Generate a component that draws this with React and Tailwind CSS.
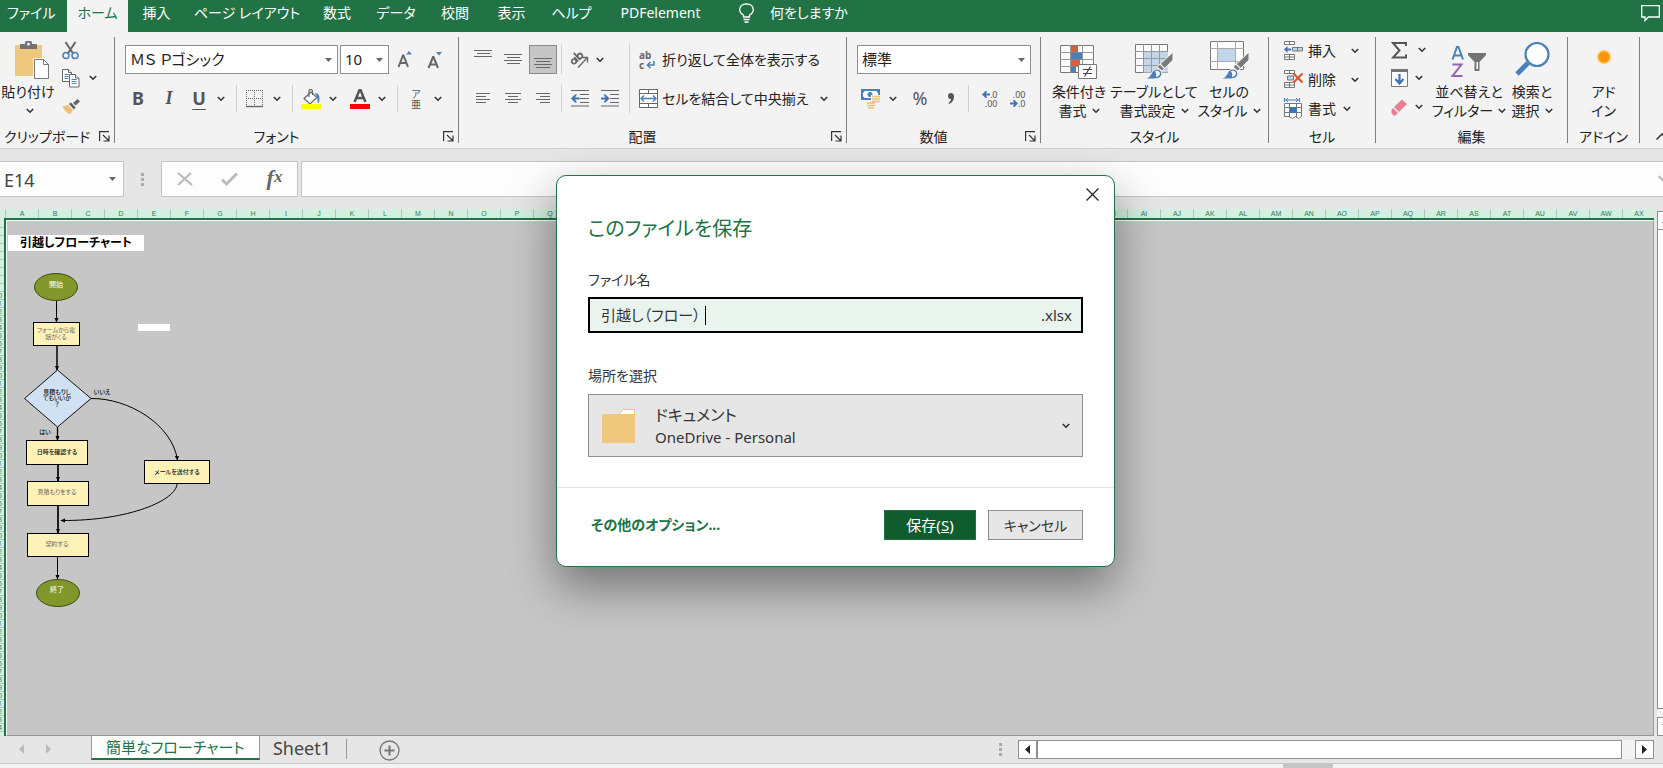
import React, { useState } from 'react';

const tabs = [
  { label: 'ファイル', className: 'w-[67px] pl-[7px] text-left' },
  { label: 'ホーム', className: 'w-[61px]', active: true },
  { label: '挿入', className: 'w-[57px]' },
  { label: 'ページ レイアウト', className: 'w-[124px]' },
  { label: '数式', className: 'w-[56px]' },
  { label: 'データ', className: 'w-[62px]' },
  { label: '校閲', className: 'w-[56px]' },
  { label: '表示', className: 'w-[57px]' },
  { label: 'ヘルプ', className: 'w-[63px]' },
  { label: 'PDFelement', className: 'w-[115px]' },
];

const columnName = (i) =>
  i < 26 ? String.fromCharCode(65 + i) : 'A' + String.fromCharCode(65 + i - 26);

const columns = Array.from({ length: 50 }, (_, i) => columnName(i));
const rows = Array.from({ length: 64 }, (_, i) => i + 1);

/* ---------- small shared pieces ---------- */

const Chevron = () => (
  <svg width="8" height="6" viewBox="0 0 8 6" fill="none" stroke="#333" strokeWidth="1.6">
    <path d="M0.8 1 4 4.2 7.2 1" />
  </svg>
);

const Triangle = () => (
  <svg width="7" height="4" viewBox="0 0 7 4" fill="#666">
    <path d="M0 0h7L3.5 4z" />
  </svg>
);

const IconButton = ({ label, className = '', children }) => (
  <button aria-label={label} className={`flex shrink-0 items-center justify-center ${className}`}>
    {children}
  </button>
);

const Divider = ({ className = '' }) => (
  <div className={`flex shrink-0 justify-center self-stretch ${className}`}>
    <div className="w-px bg-[#cfcfcf]" />
  </div>
);

const Dropdown = ({ label, value, className = '' }) => (
  <div className={`relative flex h-[29px] items-center border border-[#8f8f8f] bg-white ${className}`}>
    <select
      aria-label={label}
      defaultValue={value}
      className="h-full w-full appearance-none bg-transparent pl-1 text-[15px] text-[#222] outline-none"
    >
      <option>{value}</option>
    </select>
    <span className="pointer-events-none absolute right-[5px]">
      <Triangle />
    </span>
  </div>
);

const Group = ({ title, launcher, className = '', children }) => (
  <section className={`my-[5px] flex shrink-0 flex-col border-r border-[#808080] ${className}`}>
    <div className="h-[93px]">{children}</div>
    <div className="flex h-[14px] items-center">
      <span className="flex-1 text-center whitespace-nowrap">{title}</span>
      {launcher && (
        <IconButton label={`${title}の設定`} className="w-[20px]">
          <svg width="11" height="11" viewBox="0 0 11 11" fill="none" stroke="#333" strokeWidth="1.2">
            <path d="M0.6 10V0.6H10M4 4l5.5 5.5M10 4.5V10H4.5" />
          </svg>
        </IconButton>
      )}
    </div>
  </section>
);

const BigButton = ({ icon, line1, line2, arrow = true, className = '' }) => (
  <button className={`flex shrink-0 flex-col items-center whitespace-nowrap leading-[19px] ${className}`}>
    <span className="flex h-[45px] items-end justify-center pb-[2px]">{icon}</span>
    <span>{line1}</span>
    <span className="flex items-center gap-[5px]">
      {line2}
      {arrow && <Chevron />}
    </span>
  </button>
);

const Lines = ({ rows: list, width = 18, height = 18 }) => (
  <svg width={width} height={height} viewBox={`0 0 ${width} ${height}`} fill="#666">
    {list.map(([x, y, w]) => (
      <rect key={y} x={x} y={y} width={w} height="1" />
    ))}
  </svg>
);

/* ---------- icons ---------- */

const PasteIcon = () => (
  <svg width="36" height="40" viewBox="0 0 36 40">
    <path d="M1 5h27v31H1z" fill="#edc87e" />
    <path d="M6 9V4h5V2.500q0-1.500 1.500-1.500h4q1.500 0 1.500 1.500V4h5v5z" fill="#737373" />
    <circle cx="14.500" cy="4" r="1.500" fill="#f3f3f3" />
    <path d="M19 18h11l6 6v16H19z" fill="#f3f3f3" />
    <path d="M20.500 19.500h9l5 5v14h-14z" fill="#fff" stroke="#777" />
    <path d="M29.500 19.500v5h5" fill="none" stroke="#777" />
  </svg>
);

const CutIcon = () => (
  <svg width="17" height="19" viewBox="0 0 17 19" fill="none">
    <path d="M3.500 1 11.500 13M13.500 1 5.500 13" stroke="#666" strokeWidth="2" />
    <circle cx="4" cy="14.500" r="3" stroke="#4a80b8" strokeWidth="1.500" />
    <circle cx="13" cy="14.500" r="3" stroke="#4a80b8" strokeWidth="1.500" />
  </svg>
);

const CopyIcon = () => (
  <svg width="18" height="19" viewBox="0 0 18 19" fill="#fff" stroke="#666">
    <path d="M0.500 0.500h6l3 3v9h-9z" />
    <path d="M6.500 0.500v3h3" />
    <path d="M2.500 5.500h4M2.500 7.500h4M2.500 9.500h4" stroke="#4a80b8" />
    <path d="M7.500 5.500h6l3.500 3.500v9h-9.500z" />
    <path d="M13.500 5.500v3.500h3.500" />
    <path d="M9.500 10.500h5M9.500 12.500h5M9.500 14.500h5" stroke="#4a80b8" />
  </svg>
);

const FormatPainterIcon = () => (
  <svg width="18" height="16" viewBox="0 0 18 16">
    <path d="M0.500 7.500 6 6l5 5-3 4.500Q3 13 0.500 7.500z" fill="#edc07a" />
    <path d="M7 5 9 3.500l4.500 5-1.500 2z" fill="#5a5a5a" />
    <path d="m11 4 4.500-4L18 2.500 13.500 6.500z" fill="#666" />
  </svg>
);

const BordersIcon = () => (
  <svg width="18" height="18" viewBox="0 0 18 18" fill="none" stroke="#666">
    <path d="M0.500 0v16M16.500 0v16M8.500 0v16M0 0.500h17M0 8.500h17" strokeDasharray="1 1" />
    <path d="M0 16.500h17" strokeWidth="1.400" />
  </svg>
);

const FillIcon = () => (
  <svg width="20" height="20" viewBox="0 0 20 20">
    <path d="M10 3 3 9.500l6 5.500 7-6.500z" fill="#fff" stroke="#666" strokeWidth="1.200" />
    <path d="M8 8V2.500q0-2 1.700-2t1.800 2V6" fill="none" stroke="#666" strokeWidth="1.200" />
    <path d="M14 4q5 .5 4.500 6 0 3-1.500 4.500Q16 11 16.500 9z" fill="#4a80b8" />
    <path d="M0 15h20v5H0z" fill="#ff0" />
  </svg>
);

const OrientationIcon = () => (
  <svg width="20" height="19" viewBox="0 0 20 19" fill="none" stroke="#666" strokeWidth="1.700">
    <g transform="rotate(-42 8 8)">
      <circle cx="3.500" cy="8.500" r="2.300" />
      <path d="M6.500 5.500v6M9 2v9.500" />
      <circle cx="11.500" cy="8.500" r="2.400" />
    </g>
    <path d="M9 17.500 18 8M13.500 7.500h5v5" strokeWidth="1.300" />
  </svg>
);

const Indent = ({ out }) => (
  <svg width="18" height="17" viewBox="0 0 18 17">
    <path d="M0 0.500h18M9 4.500h9M9 8.500h9M9 12.500h9M0 16h18" stroke="#666" fill="none" />
    <path
      d={out ? 'M0 8.500 4 4.500h2L4 7.500h4.500v2H4l2 3H4z' : 'M8.500 8.500 4.500 4.500h-2L4.500 7.500H0v2h4.500l-2 3h2z'}
      fill="#3f74b0"
    />
  </svg>
);

const MergeIcon = () => (
  <svg width="19" height="19" viewBox="0 0 19 19" fill="#fff" stroke="#666">
    <path d="M0.500 0.500h18v18h-18z" />
    <path d="M0.500 4.500h18M0.500 14.500h18M9.500 0.500v4M9.500 14.500v4" />
    <path d="M2.500 9.500h14M5 6.500l-3 3 3 3M14 6.500l3 3-3 3" fill="none" stroke="#4a80b8" strokeWidth="1.400" />
  </svg>
);

const WrapIcon = () => (
  <span className="flex w-[18px] flex-col items-start text-[10px] leading-[10px] font-bold text-[#666]">
    <span>ab</span>
    <span className="flex items-center gap-[2px]">
      c
      <svg width="9" height="8" viewBox="0 0 9 8" fill="none" stroke="#4a80b8" strokeWidth="1.500">
        <path d="M8 0v4H2M4.500 1 1.500 4l3 3" />
      </svg>
    </span>
  </span>
);

const CurrencyIcon = () => (
  <svg width="20" height="20" viewBox="0 0 20 20">
    <path d="M0 0h19v11H0z" fill="#4a80b8" />
    <path d="M2 3.500q1.500 0 1.500-1.500h12q0 1.500 1.500 1.500v4q-1.500 0-1.500 1.500h-12Q3.500 7.500 2 7.500z" fill="#fff" />
    <circle cx="9" cy="5.500" r="2.500" fill="#4a80b8" />
    <path d="M10 6h9v9h-3v4H5v-7h5z" fill="#f3f3f3" />
    <path d="M11 7.500h8M11 10h8M11 12.500h8M6 14h8M6 16.500h8M7 19h6" stroke="#edc07a" strokeWidth="1.700" />
  </svg>
);

const Decimal = ({ increase }) => (
  <span className="flex w-[17px] flex-col items-stretch text-[9px] leading-[9px]">
    <span className="flex items-center justify-end">
      {increase && (
        <svg width="8" height="7" viewBox="0 0 8 7" fill="#3f74b0">
          <path d="M0 3.500 3.500 0H5L4 2.500h4v2H4L5 7H3.500z" />
        </svg>
      )}
      {increase ? '.0' : '.00'}
    </span>
    <span className="flex items-center justify-end">
      {!increase && (
        <svg width="8" height="7" viewBox="0 0 8 7" fill="#3f74b0">
          <path d="M8 3.500 4.500 0H3l1 2.500H0v2h4L3 7h1.500z" />
        </svg>
      )}
      {increase ? '.00' : '.0'}
    </span>
  </span>
);

const ConditionalIcon = () => (
  <svg width="38" height="35" viewBox="0 0 38 35">
    <path d="M0.500 0.500h33v27h-33z" fill="#fff" stroke="#777" />
    <path d="M0 7.500h34M0 14.500h34M0 21.500h34M10.500 0v28M22.500 0v28" stroke="#999" />
    <path d="M11 1h7v6.500h-7zM11 14.500h9v7h-9z" fill="#d9603f" />
    <path d="M11 7.500h11v7H11zM11 21.500h5v5.500h-5z" fill="#4a80b8" />
    <path d="M18.500 19.500h18v14h-18z" fill="#fff" stroke="#777" />
    <path d="M23 24.500h9M23 28.500h9M30.500 21.500l-6 10" stroke="#444" strokeWidth="1.200" />
  </svg>
);

const Brush = () => (
  <>
    <path d="M38 8v8L27 27l-5-4z" fill="#7a7a7a" stroke="#f3f3f3" />
    <path d="m25 20 5 5" stroke="#f3f3f3" strokeWidth="1.300" />
    <path d="M10 35q4-1 6-5 2-5 7-5 4 1 4 5-1 5-8 5z" fill="#4a80b8" stroke="#f3f3f3" />
    <path d="M20 27q4-1 5 2 0 3-4 4 1-3-1-6z" fill="#fff" />
  </>
);

const TableStyleIcon = () => (
  <svg width="38" height="36" viewBox="0 0 38 36">
    <path d="M0.500 0.500h32v28h-32z" fill="#fff" stroke="#777" />
    <path d="M9 8h24v20.500H9z" fill="#c2d5ea" />
    <path d="M0 7.500h33M0 14.500h33M0 21.500h33M8.500 0v29M16.500 0v29M24.500 0v29" stroke="#999" />
    <Brush />
  </svg>
);

const CellStyleIcon = () => (
  <svg width="39" height="39" viewBox="0 0 39 39">
    <path d="M0.500 0.500h33v28h-33z" fill="#fff" stroke="#777" />
    <path d="M0 7.500h34M0 20.500h34M7.500 0v29M25.500 0v29" stroke="#aaa" />
    <path d="M8 8h17v12H8z" fill="#c2d5ea" />
    <g transform="translate(1 3)">
      <Brush />
    </g>
  </svg>
);

const CellsInsertIcon = () => (
  <svg width="19" height="19" viewBox="0 0 19 19" fill="#fff" stroke="#777">
    <path d="M0.500 0.500h10v3h-10zM5.500 0.500v3M0.500 13.500h10v5h-10zM0.500 16h10M5.500 13.500v5" />
    <path d="M8.500 6.500h10v3.500h-10z" fill="#c2d5ea" />
    <path d="M13.500 6.500v3.500" />
    <path d="M0 8.300 3.500 5v2.500H7v2H3.500V12z" fill="#3f74b0" stroke="none" />
  </svg>
);

const CellsDeleteIcon = () => (
  <svg width="19" height="19" viewBox="0 0 19 19" fill="#fff" stroke="#777">
    <path d="M0.500 0.500h10v3h-10zM5.500 0.500v3M0.500 12.500h10v5h-10zM0.500 15h10M5.500 12.500v5" />
    <path d="M3.500 6h6v4h-6z" fill="#c2d5ea" />
    <path d="m9.500 3.500 9 9M18.500 3.500l-9 9" stroke="#d9532c" strokeWidth="2.200" />
  </svg>
);

const CellsFormatIcon = () => (
  <svg width="19" height="21" viewBox="0 0 19 21" fill="#fff" stroke="#777">
    <path d="M0.500 5.500h17v13l-3 2-3-2-3 2-3-2h-5z" />
    <path d="M0 9.500h18M0 14.500h18M5.500 5.500v14M12.500 5.500v14" />
    <path d="M6 9.500h6.500v5H6z" fill="#3f74b0" stroke="#3f74b0" />
    <path d="M0.500 0v4M15.500 0v4M1 2h14M4 0 2 2l2 2M12 0l2 2-2 2" fill="none" stroke="#4a80b8" />
  </svg>
);

const SumIcon = () => (
  <svg width="16" height="17" viewBox="0 0 16 17" fill="none" stroke="#555" strokeWidth="2">
    <path d="M15 4V1H2l6.500 7.500L2 15.500h13V12.500" />
  </svg>
);

const FillDownIcon = () => (
  <svg width="18" height="19" viewBox="0 0 18 19">
    <path d="M0.500 0.500h16v17h-16z" fill="#fff" stroke="#777" />
    <path d="M0 0h17v3H0z" fill="#777" />
    <path d="M8.500 5v9M4.500 10l4 4.500 4-4.500" fill="none" stroke="#3f74b0" strokeWidth="2.200" />
  </svg>
);

const EraserIcon = () => (
  <svg width="17" height="17" viewBox="0 0 17 17">
    <path d="M11 0.500 16 5 8 13 3 8z" fill="#e77f95" />
    <path d="m2 9 5 5-2.500 2.500H2.500L0.500 14v-3z" fill="#e77f95" />
  </svg>
);

const SortFilterIcon = () => (
  <svg width="36" height="35" viewBox="0 0 36 35" fill="none">
    <path d="M1.500 14.500 6 2h1.500L12 14.500M3.500 10.500h7" stroke="#4a80b8" strokeWidth="2" />
    <path d="M1.500 19.500h9L1.500 31h10" stroke="#9664b4" strokeWidth="2" />
    <path d="M17 8h18v2l-6.500 7v9h-5v-9L17 10z" fill="#737373" />
    <path d="M25.500 17h1.500v7h-1.500z" fill="#fff" />
  </svg>
);

const FindIcon = () => (
  <svg width="35" height="38" viewBox="0 0 35 38" fill="none" stroke="#4a80b8">
    <path d="M2 32 13 21" strokeWidth="5" />
    <circle cx="22" cy="12.500" r="11.500" fill="#fff" strokeWidth="2.200" />
  </svg>
);

/* ---------- ribbon ---------- */

const TabBar = () => (
  <header className="flex h-[32px] shrink-0 items-stretch bg-[#217346] text-[14px] text-white">
    {tabs.map((tab) => (
      <button
        key={tab.label}
        className={`shrink-0 pb-[7px] whitespace-nowrap ${tab.className} ${
          tab.active ? 'bg-[#f3f3f3] text-[#217346]' : ''
        }`}
      >
        {tab.label}
      </button>
    ))}
    <button className="ml-[21px] flex items-center gap-[16px] pb-[7px] whitespace-nowrap">
      <svg width="15" height="20" viewBox="0 0 15 20" fill="none" stroke="#fff" strokeWidth="1.300">
        <path d="M4.500 14v-2q-3.800-2-3.800-5.500Q1 1 7.500 .8 14 1 14.300 6.500 14.300 10 10.500 12v2zM4.500 16.500h6M5.500 19h4" />
      </svg>
      何をしますか
    </button>
    <button aria-label="コメント" className="mr-[3px] ml-auto pb-[6px]">
      <svg width="19" height="17" viewBox="0 0 19 17" fill="none" stroke="#fff" strokeWidth="1.300">
        <path d="M0.700 0.700h17.600v11.300H7.500L4 15.500V12H0.700z" />
      </svg>
    </button>
  </header>
);

const ClipboardGroup = () => (
  <Group title="クリップボード" launcher className="w-[115px]">
    <div className="flex h-full">
      <button className="flex w-[56px] flex-col items-center whitespace-nowrap leading-[19px]">
        <span className="flex h-[45px] items-end pb-[2px] pl-2">
          <PasteIcon />
        </span>
        <span>貼り付け</span>
        <span className="flex h-[19px] items-center pl-1">
          <Chevron />
        </span>
      </button>
      <div className="flex flex-col pl-[3px]">
        <IconButton label="切り取り" className="h-[26px] w-[22px]">
          <CutIcon />
        </IconButton>
        <div className="flex h-[30px] items-center">
          <IconButton label="コピー" className="w-[24px]">
            <CopyIcon />
          </IconButton>
          <IconButton label="コピーのオプション" className="w-[20px]">
            <Chevron />
          </IconButton>
        </div>
        <IconButton label="書式のコピー/貼り付け" className="h-[28px] w-[24px]">
          <FormatPainterIcon />
        </IconButton>
      </div>
    </div>
  </Group>
);

const FontGroup = () => (
  <Group title="フォント" launcher className="w-[344px]">
    <div className="flex items-center gap-[2px] pt-2 pl-[10px]">
      <Dropdown label="フォント" value="ＭＳ Ｐゴシック" className="w-[213px]" />
      <Dropdown label="フォント サイズ" value="10" className="w-[49px]" />
      <IconButton label="フォント サイズの拡大" className="w-[28px]">
        <svg width="16" height="18" viewBox="0 0 16 18" fill="none">
          <path d="M1.500 16 6 4.500h.5L11 16M3 12h6.500" stroke="#666" strokeWidth="2" />
          <path d="M9 3.500 12 0l3 3.500z" fill="#4a80b8" />
        </svg>
      </IconButton>
      <IconButton label="フォント サイズの縮小" className="w-[28px]">
        <svg width="16" height="18" viewBox="0 0 16 18" fill="none">
          <path d="M1.500 17 6 6h.5L11 17M3 13.500h6.500" stroke="#666" strokeWidth="2" />
          <path d="M9 1h6l-3 3.500z" fill="#4a80b8" />
        </svg>
      </IconButton>
    </div>
    <div className="mt-[11px] flex h-[27px] items-center pl-2 text-[18px] text-[#555]">
      <IconButton label="太字" className="w-[30px] font-bold">B</IconButton>
      <IconButton label="斜体" className="w-[32px] font-['Liberation_Serif'] font-bold italic">I</IconButton>
      <IconButton label="下線" className="w-[28px] font-bold underline underline-offset-4">U</IconButton>
      <IconButton label="下線の種類" className="w-[16px]"><Chevron /></IconButton>
      <Divider className="w-[15px]" />
      <IconButton label="罫線" className="w-[22px]"><BordersIcon /></IconButton>
      <IconButton label="罫線の種類" className="w-[22px]"><Chevron /></IconButton>
      <Divider className="w-[9px]" />
      <IconButton label="塗りつぶしの色" className="w-[28px]"><FillIcon /></IconButton>
      <IconButton label="塗りつぶしの色の選択" className="w-[16px]"><Chevron /></IconButton>
      <IconButton label="フォントの色" className="ml-[5px] w-[28px]">
        <svg width="20" height="20" viewBox="0 0 20 20">
          <path d="M4.500 13 9.500 1h1l5 12M6.500 9h7" fill="none" stroke="#555" strokeWidth="2.400" />
          <path d="M0 15h20v5H0z" fill="#f00" />
        </svg>
      </IconButton>
      <IconButton label="フォントの色の選択" className="w-[16px]"><Chevron /></IconButton>
      <Divider className="w-[15px]" />
      <IconButton label="ふりがな" className="w-[22px] flex-col text-[10px] leading-[10px]">
        <span>ア</span>
        <span>亜</span>
      </IconButton>
      <IconButton label="ふりがなの設定" className="w-[22px]"><Chevron /></IconButton>
    </div>
  </Group>
);

const AlignmentGroup = () => (
  <Group title="配置" launcher className="w-[388px]">
    <div className="flex">
      <div className="w-[166px] pt-2 pl-[9px]">
        <div className="flex h-[29px] items-center">
          <IconButton label="上揃え" className="h-full w-[30px]">
            <Lines rows={[[0, 0, 18], [3, 3, 13], [0, 6, 18]]} height={19} />
          </IconButton>
          <IconButton label="上下中央揃え" className="h-full w-[30px]">
            <Lines rows={[[0, 4, 18], [3, 7, 13], [0, 10, 18], [3, 13, 13]]} height={19} />
          </IconButton>
          <IconButton label="下揃え" className="ml-[1px] h-full w-[28px] border border-[#8a8a8a] bg-[#c6c6c6]">
            <Lines rows={[[0, 8, 18], [2, 11, 14], [0, 14, 18], [2, 17, 14]]} height={19} />
          </IconButton>
          <Divider className="w-[9px]" />
          <IconButton label="方向" className="w-[26px]"><OrientationIcon /></IconButton>
          <IconButton label="方向の選択" className="w-[16px]"><Chevron /></IconButton>
        </div>
        <div className="mt-[11px] flex h-[27px] items-center">
          <IconButton label="左揃え" className="w-[30px]">
            <Lines rows={[[0, 0, 14], [0, 3, 10], [0, 6, 14], [0, 9, 10]]} width={14} height={11} />
          </IconButton>
          <IconButton label="中央揃え" className="w-[30px]">
            <Lines rows={[[0, 0, 16], [3, 3, 10], [0, 6, 16], [3, 9, 10]]} width={16} height={11} />
          </IconButton>
          <IconButton label="右揃え" className="w-[29px]">
            <Lines rows={[[0, 0, 14], [4, 3, 10], [0, 6, 14], [4, 9, 10]]} width={14} height={11} />
          </IconButton>
          <Divider className="w-[9px]" />
          <IconButton label="インデントを減らす" className="w-[28px]"><Indent out /></IconButton>
          <IconButton label="インデントを増やす" className="w-[31px]"><Indent /></IconButton>
        </div>
      </div>
      <div className="mt-[7px] flex h-[69px]">
        <Divider className="w-[9px]" />
      </div>
      <div className="pt-2 pl-[5px]">
        <button className="flex h-[29px] items-center gap-[5px] whitespace-nowrap">
          <WrapIcon />
          折り返して全体を表示する
        </button>
        <button className="mt-[11px] flex h-[27px] items-center gap-1 whitespace-nowrap">
          <MergeIcon />
          セルを結合して中央揃え
          <span className="ml-2"><Chevron /></span>
        </button>
      </div>
    </div>
  </Group>
);

const NumberGroup = () => (
  <Group title="数値" launcher className="w-[194px]">
    <div className="flex pt-2 pl-[10px]">
      <Dropdown label="表示形式" value="標準" className="w-[174px]" />
    </div>
    <div className="mt-[11px] flex h-[27px] items-center pl-[10px] text-[#555]">
      <IconButton label="通貨表示形式" className="w-[28px]"><CurrencyIcon /></IconButton>
      <IconButton label="通貨の選択" className="w-[16px]"><Chevron /></IconButton>
      <IconButton label="パーセント スタイル" className="w-[38px] text-[18px]">%</IconButton>
      <IconButton label="桁区切りスタイル" className="w-[23px]">
        <svg width="6" height="11" viewBox="0 0 6 11" fill="#555">
          <path d="M3 0q3 0 3 3.500Q6 9 1 11L.5 10Q3 8.500 3 6 0 6 0 3t3-3z" />
        </svg>
      </IconButton>
      <Divider className="w-[13px]" />
      <IconButton label="小数点以下の表示桁数を増やす" className="w-[28px]"><Decimal increase /></IconButton>
      <IconButton label="小数点以下の表示桁数を減らす" className="w-[28px]"><Decimal /></IconButton>
    </div>
  </Group>
);

const StylesGroup = () => (
  <Group title="スタイル" className="w-[228px]">
    <div className="flex pl-[5px]">
      <BigButton icon={<ConditionalIcon />} line1="条件付き" line2="書式" className="w-[66px]" />
      <BigButton icon={<TableStyleIcon />} line1="テーブルとして" line2="書式設定" className="w-[84px]" />
      <BigButton icon={<CellStyleIcon />} line1="セルの" line2="スタイル" className="w-[66px]" />
    </div>
  </Group>
);

const CellsGroup = () => (
  <Group title="セル" className="w-[107px]">
    <div className="flex flex-col pl-[15px]">
      <button className="flex h-[27px] items-center gap-[5px]">
        <CellsInsertIcon /> 挿入
        <span className="ml-[10px]"><Chevron /></span>
      </button>
      <button className="flex h-[31px] items-center gap-[5px]">
        <CellsDeleteIcon /> 削除
        <span className="ml-[10px]"><Chevron /></span>
      </button>
      <button className="flex h-[27px] items-center gap-[5px]">
        <CellsFormatIcon /> 書式
        <span className="ml-[2px]"><Chevron /></span>
      </button>
    </div>
  </Group>
);

const EditingGroup = () => (
  <Group title="編集" className="w-[192px]">
    <div className="flex">
      <div className="flex w-[58px] flex-col pl-[15px]">
        <button aria-label="合計" className="flex h-[26px] items-center gap-[11px]">
          <SumIcon /> <Chevron />
        </button>
        <button aria-label="フィル" className="flex h-[30px] items-center gap-[6px]">
          <FillDownIcon /> <Chevron />
        </button>
        <button aria-label="クリア" className="flex h-[28px] items-center gap-[7px]">
          <EraserIcon /> <Chevron />
        </button>
      </div>
      <BigButton icon={<SortFilterIcon />} line1="並べ替えと" line2="フィルター" className="w-[70px]" />
      <BigButton icon={<FindIcon />} line1="検索と" line2="選択" className="w-[56px]" />
    </div>
  </Group>
);

const AddinGroup = () => (
  <Group title="アドイン" className="w-[72px]">
    <div className="flex justify-center">
      <BigButton
        icon={
          <svg width="16" height="31" viewBox="0 0 16 31">
            <circle cx="8" cy="8" r="7" fill="#ffc766" />
            <circle cx="8" cy="8" r="5.500" fill="#ff9408" />
          </svg>
        }
        line1="アド"
        line2="イン"
        arrow={false}
      />
    </div>
  </Group>
);

const Ribbon = () => (
  <div className="flex h-[117px] shrink-0 overflow-hidden border-b border-[#cfcfcf] bg-[#f3f3f3] text-[14px]">
    <ClipboardGroup />
    <FontGroup />
    <AlignmentGroup />
    <NumberGroup />
    <StylesGroup />
    <CellsGroup />
    <EditingGroup />
    <AddinGroup />
    <button aria-label="リボンを折りたたむ" className="ml-auto flex w-[7px] shrink-0 items-end overflow-hidden pb-2">
      <svg className="shrink-0" width="12" height="7" viewBox="0 0 12 7" fill="none" stroke="#333" strokeWidth="1.500">
        <path d="M0.500 6.500 6 1l5.500 5.500" />
      </svg>
    </button>
  </div>
);

/* ---------- formula bar ---------- */

const FormulaBar = () => (
  <div className="flex h-[60px] shrink-0 items-start bg-[#e6e6e6] pt-3">
    <div className="flex h-[36px] w-[124px] shrink-0 items-center border border-l-0 border-[#c3c3c3] bg-[#fdfdfd]">
      <input
        aria-label="名前ボックス"
        defaultValue="E14"
        className="w-[109px] bg-transparent pt-[2px] pl-1 text-[18px] text-[#444] outline-none"
      />
      <button aria-label="名前の一覧">
        <Triangle />
      </button>
    </div>
    <div className="flex h-[36px] w-[37px] shrink-0 flex-col items-center justify-center gap-[2px]">
      <span className="h-[3px] w-[3px] bg-[#aaa]" />
      <span className="h-[3px] w-[3px] bg-[#aaa]" />
      <span className="h-[3px] w-[3px] bg-[#aaa]" />
    </div>
    <div className="flex h-[36px] w-[137px] shrink-0 items-center border border-[#c3c3c3] bg-[#fdfdfd]">
      <IconButton label="キャンセル" className="w-[45px]">
        <svg width="16" height="14" viewBox="0 0 16 14" fill="none" stroke="#bbb" strokeWidth="2.200">
          <path d="M1 1 15 13M14 1 1 13" />
        </svg>
      </IconButton>
      <IconButton label="入力" className="w-[45px]">
        <svg width="17" height="14" viewBox="0 0 17 14" fill="none" stroke="#bbb" strokeWidth="3">
          <path d="M1 7.500 5.500 12 16 1.500" />
        </svg>
      </IconButton>
      <IconButton label="関数の挿入" className="w-[45px] pb-1 font-['Liberation_Serif'] text-[22px] font-bold text-[#666] italic">
        f<span className="text-[17px]">x</span>
      </IconButton>
    </div>
    <div className="ml-[3px] flex h-[36px] flex-1 items-center overflow-hidden border border-r-0 border-[#c3c3c3] bg-[#fdfdfd]">
      <input aria-label="数式バー" className="min-w-0 flex-1 bg-transparent px-2 text-[16px] outline-none" />
      <svg width="5" height="8" viewBox="0 0 5 8" fill="none" stroke="#bbb" strokeWidth="2">
        <path d="m0.500 1 5 5" />
      </svg>
    </div>
  </div>
);

/* ---------- worksheet ---------- */

const Flowchart = () => (
  <svg width="220" height="370" viewBox="7 251 220 370" fontSize="6" textAnchor="middle" fill="#333">
    <defs>
      <marker id="arrow" viewBox="0 0 6 6" refX="5" refY="3" markerWidth="5" markerHeight="5" markerUnits="userSpaceOnUse" orient="auto">
        <path d="M0 0.500 6 3 0 5.500z" fill="#000" />
      </marker>
    </defs>

    <rect x="138" y="324" width="32" height="7" fill="#fff" />

    <g fill="none" stroke="#000">
      <path d="M56.500 301V322" markerEnd="url(#arrow)" />
      <path d="M57 346V370" strokeWidth="1.500" markerEnd="url(#arrow)" />
      <path d="M57.500 427V440" strokeWidth="1.300" markerEnd="url(#arrow)" />
      <path d="M58 465V481" strokeWidth="1.700" markerEnd="url(#arrow)" />
      <path d="M58 506V533" strokeWidth="1.700" markerEnd="url(#arrow)" />
      <path d="M57.500 557V579" markerEnd="url(#arrow)" />
      <path d="M91 398.500C128 398 172 424 177.500 460" markerEnd="url(#arrow)" />
      <path d="M177 484C176 500 130 521 61 520.500" markerEnd="url(#arrow)" />
    </g>

    <g fill="#82972a" stroke="#3f4c12">
      <ellipse cx="56" cy="287" rx="21.500" ry="13.500" />
      <ellipse cx="58" cy="593" rx="21.500" ry="13.500" />
    </g>
    <path d="M57.500 370 91 398.500 57.500 427 24.500 398.500z" fill="#cfe1f2" stroke="#111" />
    <g fill="#fff2b8" stroke="#000">
      <rect x="33.500" y="322.500" width="46" height="23" />
      <rect x="26.500" y="440.500" width="61" height="24" />
      <rect x="27.500" y="481.500" width="61" height="24" />
      <rect x="27.500" y="533.500" width="61" height="23" />
      <rect x="144.500" y="460.500" width="65" height="23" />
    </g>

    <g fill="#fff" fontSize="7">
      <text x="56" y="287">開始</text>
      <text x="57" y="592">終了</text>
    </g>
    <g fill="#666">
      <text x="56" y="332">フォームから電</text>
      <text x="56" y="339">話がくる</text>
      <text x="57" y="494">見積もりをする</text>
      <text x="57" y="546">契約する</text>
    </g>
    <g fill="#111" fontWeight="500">
      <text x="57" y="394">見積もりし</text>
      <text x="57" y="400">てもいいか</text>
      <text x="57" y="406">？</text>
      <text x="102" y="394">いいえ</text>
      <text x="45" y="434">はい</text>
      <text x="57" y="454">日時を確認する</text>
      <text x="177" y="474">メールを送付する</text>
    </g>
  </svg>
);

const Worksheet = () => (
  <main className="flex min-h-0 flex-1 bg-[#e6e6e6]">
    <div className="flex min-w-0 flex-1 flex-col">
      <div className="flex h-[9px] shrink-0 overflow-hidden bg-[#d3f0e0] pl-[5px] font-['Liberation_Sans'] text-[7px] leading-[10px] text-[#2f7a55]">
        {columns.map((name) => (
          <div key={name} className="w-[33px] shrink-0 border-l border-[#b5c4bb] text-center">
            {name}
          </div>
        ))}
      </div>
      <div className="flex min-h-0 flex-1">
        <div className="w-[4px] shrink-0 overflow-hidden bg-[#d3f0e0] pt-[2px] text-[7px] leading-[7px] text-[#3b8460]">
          {rows.map((n) => (
            <div key={n} className="flex h-[8px] justify-end border-b border-[#b5c4bb] pr-px">
              <span className="w-[10px] shrink-0 text-center">{n}</span>
            </div>
          ))}
        </div>
        <div className="min-w-0 flex-1 overflow-hidden border-t-2 border-l-2 border-[#217346]">
          <div className="h-full border-t border-r border-b border-l border-t-white border-r-[#999] border-b-[#999] border-l-white bg-[#c6c6c6]">
            <div className="mt-[14px] ml-px h-[16px] w-[136px] bg-white text-center text-[12px] leading-[16px] font-bold whitespace-nowrap text-black">
              引越しフローチャート
            </div>
            <Flowchart />
          </div>
        </div>
      </div>
    </div>
    <div className="flex w-[9px] shrink-0 flex-col overflow-hidden pt-[2px] pl-[3px]">
      <button aria-label="上へスクロール" className="flex h-[19px] w-[19px] shrink-0 items-center justify-center border border-[#8f8f8f] bg-white">
        <svg width="9" height="5" viewBox="0 0 9 5" fill="#222"><path d="M0 5h9L4.500 0z" /></svg>
      </button>
      <div className="w-[19px] flex-1 border border-t-0 border-[#8f8f8f] bg-white" />
      <div className="h-[8px] w-[19px] bg-[#f3f3f3]" />
      <button aria-label="下へスクロール" className="flex h-[19px] w-[19px] shrink-0 items-center justify-center border border-[#8f8f8f] bg-white">
        <svg width="9" height="5" viewBox="0 0 9 5" fill="#222"><path d="M0 0h9L4.500 5z" /></svg>
      </button>
    </div>
  </main>
);

const SheetBar = () => (
  <footer className="shrink-0">
    <div className="flex h-[27px] items-start bg-[#e6e6e6]">
      <div className="flex h-[26px] w-[91px] shrink-0 items-center gap-[22px] pl-[19px]">
        <button aria-label="前のシート">
          <svg width="5" height="10" viewBox="0 0 5 10" fill="#bbb"><path d="M5 0v10L0 5z" /></svg>
        </button>
        <button aria-label="次のシート">
          <svg width="5" height="10" viewBox="0 0 5 10" fill="#bbb"><path d="M0 0v10l5-5z" /></svg>
        </button>
      </div>
      <button className="h-[24px] w-[169px] shrink-0 border-r border-b-2 border-l border-r-[#999] border-b-[#217346] border-l-[#999] bg-white text-[15px] leading-[20px] whitespace-nowrap text-[#217346]">
        簡単なフローチャート
      </button>
      <button className="h-[24px] w-[84px] shrink-0 text-[18px] leading-[20px] text-[#444]">Sheet1</button>
      <div className="mt-[3px] ml-[2px] h-[20px] w-px bg-[#999]" />
      <button aria-label="新しいシート" className="mt-1 ml-[32px]">
        <svg width="21" height="21" viewBox="0 0 21 21" fill="none" stroke="#777">
          <circle cx="10.500" cy="10.500" r="9.500" strokeWidth="1.300" />
          <path d="M10.500 5.500v10M5.500 10.500h10" strokeWidth="2" />
        </svg>
      </button>
      <div className="mt-[7px] mr-[16px] ml-auto flex flex-col gap-[2px]">
        <span className="h-[3px] w-[3px] bg-[#aaa]" />
        <span className="h-[3px] w-[3px] bg-[#aaa]" />
        <span className="h-[3px] w-[3px] bg-[#aaa]" />
      </div>
      <div className="mt-1 mr-[9px] flex h-[19px] w-[636px] bg-[#f3f3f3]">
        <button aria-label="左へスクロール" className="flex w-[19px] items-center justify-center border border-[#8f8f8f] bg-white">
          <svg width="5" height="9" viewBox="0 0 5 9" fill="#222"><path d="M5 0v9L0 4.500z" /></svg>
        </button>
        <div className="mr-[13px] flex-1 border border-[#8f8f8f] bg-white" />
        <button aria-label="右へスクロール" className="flex w-[19px] items-center justify-center border border-[#8f8f8f] bg-white">
          <svg width="5" height="9" viewBox="0 0 5 9" fill="#222"><path d="M0 0v9l5-4.500z" /></svg>
        </button>
      </div>
    </div>
    <div className="flex h-[5px] justify-end border-t border-[#c6c6c6] bg-[#f3f3f3] pr-[330px]">
      <div className="w-[50px] bg-[#c6c6c6]" />
    </div>
  </footer>
);

/* ---------- save dialog ---------- */

const SaveDialog = () => {
  const [fileName, setFileName] = useState('引越し（フロー）');

  return (
    <div className="absolute inset-0 flex items-start justify-center pt-[175px] pl-2">
      <div
        role="dialog"
        aria-labelledby="save-title"
        className="w-[559px] rounded-[10px] border border-[#217346] bg-white text-[14px] text-[#333] shadow-[0_20px_48px_rgba(0,0,0,0.42)]"
      >
        <div className="flex h-[36px] items-center justify-end pr-[15px]">
          <button aria-label="閉じる">
            <svg width="13" height="13" viewBox="0 0 13 13" fill="none" stroke="#222" strokeWidth="1.300">
              <path d="m0.500 0.500 12 12M12.500 0.500l-12 12" />
            </svg>
          </button>
        </div>
        <div className="px-[31px] pb-[30px]">
          <h1 id="save-title" className="text-[20px] leading-[34px] text-[#217346]">
            このファイルを保存
          </h1>
          <label htmlFor="file-name" className="mt-6 block leading-[20px]">
            ファイル名
          </label>
          <div className="mt-[7px] flex h-[36px] items-center border-2 border-black bg-[#eaf4ee] pr-[9px] pl-[11px] text-[15px]">
            <input
              id="file-name"
              value={fileName}
              onChange={(e) => setFileName(e.target.value)}
              className="w-[104px] bg-transparent outline-none"
            />
            <span className="h-[19px] w-px bg-black" />
            <span className="ml-auto">.xlsx</span>
          </div>
          <label htmlFor="location" className="mt-[33px] block leading-[20px]">
            場所を選択
          </label>
          <button
            id="location"
            aria-haspopup="listbox"
            className="mt-2 flex h-[63px] w-full items-center border border-[#8f8f8f] bg-[#e6e6e6] pr-3 pl-[13px] text-left"
          >
            <svg width="33" height="35" viewBox="0 0 33 35">
              <path d="M16.500 7 21 1.500h11.500V8h-16z" fill="#fff" stroke="#edc87e" />
              <path d="M1.500 6H33v29H0V7.500z" fill="#edc87e" />
            </svg>
            <span className="ml-5 flex-1 leading-[22px]">
              <span className="block text-[16px]">ドキュメント</span>
              <span className="block text-[15px]">OneDrive - Personal</span>
            </span>
            <Chevron />
          </button>
        </div>
        <div className="flex h-[79px] items-start border-t border-[#e3e3e3] px-[31px] pt-[22px]">
          <a href="#options" className="ml-[3px] leading-[30px] font-bold text-[#217346]">
            その他のオプション...
          </a>
          <button className="ml-auto h-[30px] w-[92px] border border-[#217346] bg-[#0f5c2f] text-[15px] text-white">
            保存(<span className="underline">S</span>)
          </button>
          <button className="ml-3 h-[30px] w-[95px] border border-[#8f8f8f] bg-[#e6e6e6]">キャンセル</button>
        </div>
      </div>
    </div>
  );
};

const App = () => (
  <div className="relative flex h-screen flex-col overflow-hidden bg-[#e6e6e6] font-['Noto_Sans','Noto_Sans_CJK_JP',sans-serif] text-[#222] [font-feature-settings:'palt']">
    <TabBar />
    <Ribbon />
    <FormulaBar />
    <Worksheet />
    <SheetBar />
    <SaveDialog />
  </div>
);

export default App;
